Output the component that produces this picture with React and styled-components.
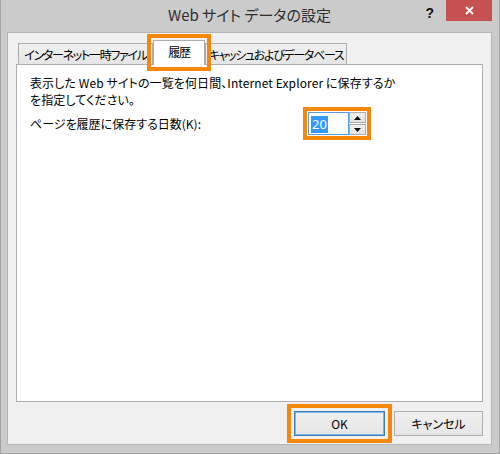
import React from "react";
import styled, { createGlobalStyle } from "styled-components";

const GlobalStyle = createGlobalStyle`
	html, body {
		margin: 0;
		padding: 0;
		background: #ffffff;
	}
	body {
		font-family: "Noto Sans CJK JP", "Noto Sans", sans-serif;
		font-feature-settings: "palt";
	}
`;

const Window = styled.div`
	box-sizing: border-box;
	width: 500px;
	height: 454px;
	display: flex;
	flex-direction: column;
	background: #cbcbcb;
	border: 1px solid #a3a3a3;
	border-top: none;
	padding: 0 7px 8px 6px;
`;

const TitleBar = styled.div`
	height: 32px;
	display: grid;
	grid-template-columns: 1fr auto 1fr;
	align-items: start;
	flex-shrink: 0;
`;

const Title = styled.div`
	grid-column: 2;
	font-size: 15px;
	line-height: 30px;
	color: #2e2e2e;
	white-space: nowrap;
`;

const Controls = styled.div`
	grid-column: 3;
	justify-self: end;
	display: flex;
	align-items: flex-start;
`;

const Help = styled.div`
	font-family: "Liberation Sans", sans-serif;
	font-weight: bold;
	font-size: 14px;
	line-height: 14px;
	color: #111;
	margin: 6px 12px 0 0;
`;

const Close = styled.div`
	width: 46px;
	height: 21px;
	background: #c75050;
	display: flex;
	align-items: center;
	justify-content: center;
`;

const Client = styled.div`
	flex: 1;
	display: flex;
	flex-direction: column;
	background: #f0f0f0;
	border: 1px solid #b5b5b5;
	padding: 7px 8px 8px 8px;
	min-height: 0;
`;

const TabStrip = styled.div`
	height: 24px;
	display: flex;
	align-items: flex-end;
	padding-left: 2px;
	flex-shrink: 0;
`;

const Tab = styled.div`
	box-sizing: border-box;
	width: ${(p) => p.$width}px;
	height: ${(p) => (p.$active ? 25 : 21)}px;
	margin-bottom: ${(p) => (p.$active ? -1 : 0)}px;
	position: relative;
	z-index: ${(p) => (p.$active ? 2 : 1)};
	background: ${(p) =>
		p.$active ? "#ffffff" : "linear-gradient(#f0f0f0, #e5e5e5)"};
	border: 1px solid #acacac;
	border-bottom: none;
	display: flex;
	align-items: center;
	justify-content: center;
	padding-bottom: ${(p) => (p.$active ? 3 : 0)}px;
	font-size: 12px;
	letter-spacing: -1.3px;
	color: #000;
	white-space: nowrap;
	outline: ${(p) => (p.$marked ? "4px solid #f7870b" : "none")};
	outline-offset: 2px;
`;

const Panel = styled.div`
	flex: 1;
	background: #ffffff;
	border: 1px solid #adadad;
	padding: 9px 13px;
	font-size: 12px;
	color: #000;
`;

const Intro = styled.p`
	margin: 0;
	line-height: 17px;
	letter-spacing: 0.1px;
`;

const SettingRow = styled.div`
	display: grid;
	grid-template-columns: 278px auto;
	align-items: center;
	margin-top: 4px;
`;

const Spin = styled.div`
	display: flex;
	width: 58px;
	height: 23px;
	outline: 4px solid #f7870b;
	outline-offset: 1px;
`;

const SpinInput = styled.div`
	box-sizing: border-box;
	width: 41px;
	height: 23px;
	border: 1px solid #569de5;
	background: #fff;
	padding: 2px 0 0 2px;
`;

const Selected = styled.span`
	display: inline-block;
	background: #3399ff;
	color: #fff;
	font-family: "Noto Sans", sans-serif;
	font-size: 13px;
	line-height: 17px;
	padding: 0 1px;
`;

const SpinButtons = styled.div`
	width: 17px;
	display: flex;
	flex-direction: column;
	gap: 1px;
`;

const SpinButton = styled.div`
	box-sizing: border-box;
	flex: 1;
	border: 1px solid #acacac;
	background: linear-gradient(#f0f0f0, #e3e3e3);
	display: flex;
	align-items: center;
	justify-content: center;
`;

const Footer = styled.div`
	display: flex;
	justify-content: flex-end;
	gap: 9px;
	margin-top: 9px;
	flex-shrink: 0;
`;

const Button = styled.div`
	box-sizing: border-box;
	width: ${(p) => p.$width}px;
	height: 25px;
	border: 1px solid ${(p) => (p.$default ? "#3c7fb1" : "#adadad")};
	box-shadow: ${(p) => (p.$default ? "inset 0 0 0 1px #7eb4ea" : "none")};
	background: linear-gradient(#f0f0f0, #e5e5e5);
	display: flex;
	align-items: center;
	justify-content: center;
	font-size: 12px;
	color: #000;
	outline: ${(p) => (p.$marked ? "4px solid #f7870b" : "none")};
	outline-offset: 3px;
`;

const Arrow = ({ up }) => (
	<svg width="7" height="4" viewBox="0 0 7 4">
		<path d={up ? "M0 4 L3.5 0 L7 4 Z" : "M0 0 L3.5 4 L7 0 Z"} fill="#111" />
	</svg>
);

export default function App() {
	return (
		<>
			<GlobalStyle />
			<Window>
				<TitleBar>
					<Title>Web サイト データの設定</Title>
					<Controls>
						<Help>?</Help>
						<Close>
							<svg width="9" height="9" viewBox="0 0 9 9">
								<path
									d="M1 1 L8 8 M8 1 L1 8"
									stroke="#fff"
									strokeWidth="1.8"
								/>
							</svg>
						</Close>
					</Controls>
				</TitleBar>
				<Client>
					<TabStrip>
						<Tab $width={135}>インターネット一時ファイル</Tab>
						<Tab $width={52} $active $marked>
							履歴
						</Tab>
						<Tab $width={142}>キャッシュおよびデータベース</Tab>
					</TabStrip>
					<Panel>
						<Intro>
							表示した Web サイトの一覧を何日間、Internet Explorer
							に保存するか
							<br />
							を指定してください。
						</Intro>
						<SettingRow>
							<span>ページを履歴に保存する日数(K):</span>
							<Spin>
								<SpinInput>
									<Selected>20</Selected>
								</SpinInput>
								<SpinButtons>
									<SpinButton>
										<Arrow up />
									</SpinButton>
									<SpinButton>
										<Arrow />
									</SpinButton>
								</SpinButtons>
							</Spin>
						</SettingRow>
					</Panel>
					<Footer>
						<Button $width={91} $default $marked>
							OK
						</Button>
						<Button $width={89}>キャンセル</Button>
					</Footer>
				</Client>
			</Window>
		</>
	);
}
